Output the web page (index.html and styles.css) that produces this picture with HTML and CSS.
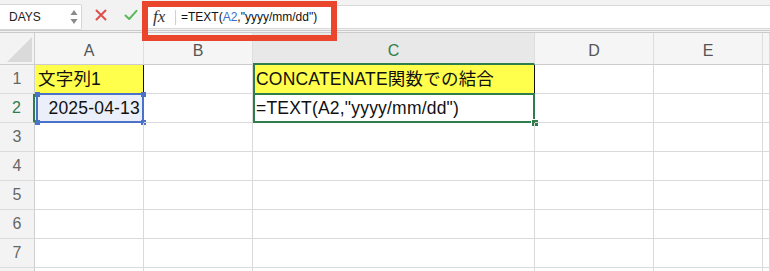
FILE: index.html
```html
<!DOCTYPE html>
<html lang="ja">
<head>
<meta charset="utf-8">
<link rel="stylesheet" href="styles.css">
</head>
<body>
<div class="toolbar">
  <div class="namebox">
    <span>DAYS</span>
    <svg class="spin" width="8" height="16" viewBox="0 0 8 16"><polygon points="4,1 7.5,6 0.5,6" fill="#8a8a8a"/><polygon points="0.5,10 7.5,10 4,15" fill="#8a8a8a"/></svg>
  </div>
  <div class="actions">
    <svg width="12" height="12" viewBox="0 0 12 12"><path d="M1.5 1.5 L10.5 10.5 M10.5 1.5 L1.5 10.5" stroke="#df4f4b" stroke-width="2" stroke-linecap="round"/></svg>
    <svg width="14" height="12" viewBox="0 0 14 12"><path d="M1.5 6.5 L5.2 10 L12.5 1.8" stroke="#5cb85c" stroke-width="2" fill="none" stroke-linecap="round" stroke-linejoin="round"/></svg>
  </div>
  <div class="formula-area">
    <div class="fx">fx</div>
    <div class="divider"></div>
    <div class="formula">=TEXT(<span class="refc">A2</span>,"yyyy/mm/dd")</div>
  </div>
</div>
<div class="redbox"></div>
<div class="sheet">
  <div class="corner"><svg width="26" height="26" viewBox="0 0 26 26"><polygon points="25,0 25,25 0,25" fill="#dadada"/></svg></div>
  <div class="ch">A</div><div class="ch">B</div><div class="ch active">C</div><div class="ch">D</div><div class="ch">E</div><div class="ch"></div>

  <div class="rh">1</div>
  <div class="c yellow bright">文字列1</div>
  <div class="c"></div>
  <div class="c yellow bright gleft">CONCATENATE関数での結合</div>
  <div class="c"></div><div class="c"></div><div class="c"></div>

  <div class="rh active">2</div>
  <div class="c refcell"><span>2025-04-13</span><div class="refsel"><i class="h tl"></i><i class="h tr"></i><i class="h bl"></i><i class="h br"></i></div></div>
  <div class="c"></div>
  <div class="c selcell">=TEXT(A2,"yyyy/mm/dd")<div class="sel"><i class="handle"></i></div></div>
  <div class="c"></div><div class="c"></div><div class="c"></div>

  <div class="rh">3</div><div class="c"></div><div class="c"></div><div class="c"></div><div class="c"></div><div class="c"></div><div class="c"></div>
  <div class="rh">4</div><div class="c"></div><div class="c"></div><div class="c"></div><div class="c"></div><div class="c"></div><div class="c"></div>
  <div class="rh">5</div><div class="c"></div><div class="c"></div><div class="c"></div><div class="c"></div><div class="c"></div><div class="c"></div>
  <div class="rh">6</div><div class="c"></div><div class="c"></div><div class="c"></div><div class="c"></div><div class="c"></div><div class="c"></div>
  <div class="rh">7</div><div class="c"></div><div class="c"></div><div class="c"></div><div class="c"></div><div class="c"></div><div class="c"></div>
  <div class="rh"></div><div class="c"></div><div class="c"></div><div class="c"></div><div class="c"></div><div class="c"></div><div class="c"></div>
</div>
</body>
</html>
```
FILE: styles.css
```css
html, body {
  margin: 0;
  padding: 0;
}
body {
  width: 770px;
  height: 271px;
  overflow: hidden;
  position: relative;
  background: #fff;
  font-family: "Liberation Sans", "Noto Sans CJK JP", sans-serif;
  color: #111;
}
.toolbar {
  display: flex;
  align-items: flex-start;
  height: 30px;
  background: #f2f2f2;
  border-bottom: 3px double #cbcbcb;
}
.namebox {
  width: 82px;
  height: 26px;
  margin-top: 4px;
  box-sizing: border-box;
  background: #fff;
  border: 1px solid #d6d6d6;
  border-left: none;
  border-radius: 0 2px 2px 0;
  display: flex;
  align-items: center;
  justify-content: space-between;
  padding: 0 3px 0 9px;
  font-size: 12px;
  color: #222;
}
.actions {
  width: 61px;
  height: 30px;
  box-sizing: border-box;
  padding-left: 13px;
  display: flex;
  align-items: center;
  gap: 17px;
}
.formula-area {
  flex: 1;
  margin-top: 5px;
  height: 24px;
  box-sizing: border-box;
  background: #fff;
  border-top: 1px solid #d9d9d9;
  border-bottom: 1px solid #d9d9d9;
  display: flex;
  align-items: center;
}
.fx {
  width: 32px;
  box-sizing: border-box;
  padding-left: 10px;
  font-family: "Liberation Serif", serif;
  font-style: italic;
  font-size: 17px;
  color: #333;
}
.divider {
  width: 1px;
  height: 15px;
  background: #d0d0d0;
}
.formula {
  padding-left: 5px;
  font-size: 12px;
  color: #111;
  white-space: nowrap;
}
.refc {
  color: #3a6fd0;
}
.redbox {
  position: absolute;
  left: 142px;
  top: 1px;
  width: 195px;
  height: 40px;
  box-sizing: border-box;
  border: 6px solid #e9462c;
}
.sheet {
  display: grid;
  grid-template-columns: 35px 109px 109px 282px 119px 109px 1fr;
  grid-template-rows: 32px repeat(8, 29px);
}
.corner {
  background: #f3f3f3;
  border-right: 1px solid #cfcfcf;
  border-bottom: 1px solid #cfcfcf;
  box-sizing: border-box;
  display: flex;
  align-items: flex-end;
  justify-content: flex-end;
  padding: 0 1px 1px 0;
}
.ch {
  background: #f5f5f5;
  border-right: 1px solid #dedede;
  border-bottom: 1px solid #cccccc;
  box-sizing: border-box;
  display: flex;
  align-items: center;
  justify-content: center;
  font-size: 16px;
  color: #555;
  padding-top: 5px;
}
.ch.active {
  background: #e8e8e8;
  color: #2e7d4a;
  border-bottom: 2px solid #2e7d4a;
}
.rh {
  background: #f3f3f3;
  border-right: 1px solid #cfcfcf;
  border-bottom: 1px solid #dcdcdc;
  box-sizing: border-box;
  display: flex;
  align-items: center;
  justify-content: center;
  font-size: 16px;
  color: #666;
}
.rh.active {
  color: #2e7d4a;
  border-right: 2px solid #2e7d4a;
}
.c {
  position: relative;
  box-sizing: border-box;
  border-right: 1px solid #dadada;
  border-bottom: 1px solid #dadada;
  font-size: 17.5px;
  letter-spacing: 0.2px;
  line-height: 29px;
  padding-left: 3px;
  white-space: nowrap;
  color: #111;
}
.yellow {
  background: #ffff4c;
}
.bright {
  border-right-color: #111;
}
.gleft {
  box-shadow: inset 2px 0 0 #2e7d4a;
}
.refcell {
  background: #eaeff9;
  text-align: right;
  padding-right: 3px;
}
.refsel {
  position: absolute;
  left: 1px;
  top: -1px;
  right: -1px;
  bottom: -1px;
  border: 2px solid #4a72c9;
}
.h {
  position: absolute;
  width: 5px;
  height: 5px;
  background: #4a72c9;
}
.tl { left: -3px; top: -3px; }
.tr { right: -4px; top: -3px; }
.bl { left: -3px; bottom: -4px; }
.br { right: -4px; bottom: -4px; }
.sel {
  position: absolute;
  left: 0;
  top: -1px;
  right: -1px;
  bottom: -1px;
  border: 2px solid #2e7d4a;
}
.handle {
  position: absolute;
  right: -5px;
  bottom: -5px;
  width: 6px;
  height: 6px;
  background: #2e7d4a;
  border: 1px solid #fff;
  border-right: none;
  border-bottom: none;
}
```
